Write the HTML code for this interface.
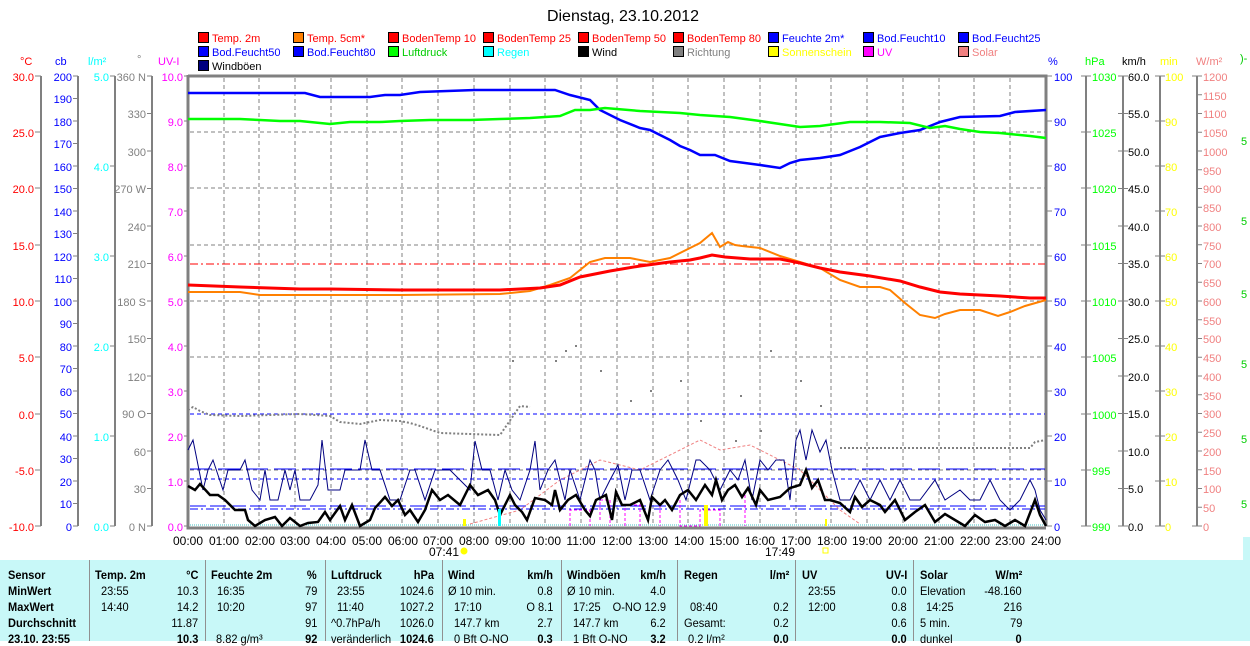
<!DOCTYPE html>
<html><head><meta charset="utf-8"><style>
body{margin:0;width:1250px;height:641px;overflow:hidden;background:#fff;font-family:"Liberation Sans",sans-serif;}
svg{position:absolute;left:0;top:0}
.tb{position:absolute;left:0;top:560px;width:1243px;height:81px;background:#c8f8f8}
.c{position:absolute;font-size:12px;white-space:nowrap;color:#000;transform:scaleX(0.92);transform-origin:left}
.r{transform-origin:right}
.b{font-weight:bold}
</style></head><body>
<svg width="1250" height="641" font-family="Liberation Sans, sans-serif" font-size="11">
<text x="623" y="21" font-size="16" text-anchor="middle">Dienstag, 23.10.2012</text>
<g stroke="#000" stroke-width="1">
<rect x="198.5" y="32.5" width="10" height="10" fill="#f00"/><rect x="293.5" y="32.5" width="10" height="10" fill="#ff8000"/><rect x="388.5" y="32.5" width="10" height="10" fill="#f00"/><rect x="483.5" y="32.5" width="10" height="10" fill="#f00"/><rect x="578.5" y="32.5" width="10" height="10" fill="#f00"/><rect x="673.5" y="32.5" width="10" height="10" fill="#f00"/><rect x="768.5" y="32.5" width="10" height="10" fill="#00f"/><rect x="863.5" y="32.5" width="10" height="10" fill="#00f"/><rect x="958.5" y="32.5" width="10" height="10" fill="#00f"/>
<rect x="198.5" y="46.5" width="10" height="10" fill="#00f"/><rect x="293.5" y="46.5" width="10" height="10" fill="#00f"/><rect x="388.5" y="46.5" width="10" height="10" fill="#0f0"/><rect x="483.5" y="46.5" width="10" height="10" fill="#0ff"/><rect x="578.5" y="46.5" width="10" height="10" fill="#000"/><rect x="673.5" y="46.5" width="10" height="10" fill="#808080"/><rect x="768.5" y="46.5" width="10" height="10" fill="#ff0"/><rect x="863.5" y="46.5" width="10" height="10" fill="#f0f"/><rect x="958.5" y="46.5" width="10" height="10" fill="#f08080"/>
<rect x="198.5" y="60.5" width="10" height="10" fill="#000080"/>
</g>
<g>
<text x="212" y="42" fill="#f00">Temp. 2m</text><text x="307" y="42" fill="#f00">Temp. 5cm*</text><text x="402" y="42" fill="#f00">BodenTemp 10</text><text x="497" y="42" fill="#f00">BodenTemp 25</text><text x="592" y="42" fill="#f00">BodenTemp 50</text><text x="687" y="42" fill="#f00">BodenTemp 80</text><text x="782" y="42" fill="#00f">Feuchte 2m*</text><text x="877" y="42" fill="#00f">Bod.Feucht10</text><text x="972" y="42" fill="#00f">Bod.Feucht25</text>
<text x="212" y="56" fill="#00f">Bod.Feucht50</text><text x="307" y="56" fill="#00f">Bod.Feucht80</text><text x="402" y="56" fill="#0c0">Luftdruck</text><text x="497" y="56" fill="#0ff">Regen</text><text x="592" y="56" fill="#000">Wind</text><text x="687" y="56" fill="#808080">Richtung</text><text x="782" y="56" fill="#ff0">Sonnenschein</text><text x="877" y="56" fill="#f0f">UV</text><text x="972" y="56" fill="#f08080">Solar</text>
<text x="212" y="70" fill="#000">Windböen</text>
</g>
<text x="20" y="65" fill="#f00">°C</text><text x="55" y="65" fill="#00f">cb</text><text x="88" y="65" fill="#0ff">l/m²</text><text x="137" y="63" fill="#808080">°</text><text x="158" y="65" fill="#f0f">UV-I</text>
<text x="1048" y="65" fill="#00f">%</text><text x="1085" y="65" fill="#0f0">hPa</text><text x="1122" y="65" fill="#000">km/h</text><text x="1160" y="65" fill="#ff0">min</text><text x="1196" y="65" fill="#f08080">W/m²</text>
<g stroke="#808080" stroke-width="2">
<line x1="41" y1="76" x2="41" y2="526"/><line x1="78" y1="76" x2="78" y2="526"/><line x1="115" y1="76" x2="115" y2="526"/><line x1="152" y1="76" x2="152" y2="526"/>
<line x1="1086" y1="76" x2="1086" y2="526"/><line x1="1123" y1="76" x2="1123" y2="526"/><line x1="1160" y1="76" x2="1160" y2="526"/><line x1="1197" y1="76" x2="1197" y2="526"/>
</g>
<g fill="#f00" text-anchor="end">
<text x="34" y="81">30.0</text><text x="34" y="137">25.0</text><text x="34" y="193">20.0</text><text x="34" y="250">15.0</text><text x="34" y="306">10.0</text><text x="34" y="362">5.0</text><text x="34" y="419">0.0</text><text x="34" y="475">-5.0</text><text x="34" y="531">-10.0</text></g>
<g stroke="#808080"><path d="M35 76h6M35 132h6M35 188h6M35 245h6M35 301h6M35 357h6M35 414h6M35 470h6M35 526h6"/>
<path d="M73 76h5M73 98.5h5M73 121h5M73 143.5h5M73 166h5M73 188.5h5M73 211h5M73 233.5h5M73 256h5M73 278.5h5M73 301h5M73 323.5h5M73 346h5M73 368.5h5M73 391h5M73 413.5h5M73 436h5M73 458.5h5M73 481h5M73 503.5h5M73 526h5"/>
<path d="M110 76h5M110 166h5M110 256h5M110 346h5M110 436h5M110 526h5"/>
<path d="M147 76h5M147 113.5h5M147 151h5M147 188.5h5M147 226h5M147 263.5h5M147 301h5M147 338.5h5M147 376h5M147 413.5h5M147 451h5M147 488.5h5M147 526h5"/>
<path d="M184 76h4M184 121h4M184 166h4M184 211h4M184 256h4M184 301h4M184 346h4M184 391h4M184 436h4M184 481h4M184 526h4"/>
<path d="M1046 76h6M1046 121h6M1046 166h6M1046 211h6M1046 256h6M1046 301h6M1046 346h6M1046 391h6M1046 436h6M1046 481h6M1046 526h6"/>
<path d="M1081 76h10M1081 132h10M1081 188h10M1081 245h10M1081 301h10M1081 357h10M1081 414h10M1081 470h10M1081 526h10"/>
<path d="M1118 76h10M1118 113.5h10M1118 151h10M1118 188.5h10M1118 226h10M1118 263.5h10M1118 301h10M1118 338.5h10M1118 376h10M1118 413.5h10M1118 451h10M1118 488.5h10M1118 526h10"/>
<path d="M1155 76h10M1155 121h10M1155 166h10M1155 211h10M1155 256h10M1155 301h10M1155 346h10M1155 391h10M1155 436h10M1155 481h10M1155 526h10"/>
<path d="M1192 76h10M1197 94.75h5M1197 113.5h5M1197 132.25h5M1197 151h5M1197 169.75h5M1197 188.5h5M1197 207.25h5M1197 226h5M1197 244.75h5M1197 263.5h5M1197 282.25h5M1197 301h5M1197 319.75h5M1197 338.5h5M1197 357.25h5M1197 376h5M1197 394.75h5M1197 413.5h5M1197 432.25h5M1197 451h5M1197 469.75h5M1197 488.5h5M1197 507.25h5M1192 526h10"/>
</g>
<g fill="#00f" text-anchor="end">
<text x="72" y="81">200</text><text x="72" y="103">190</text><text x="72" y="126">180</text><text x="72" y="148">170</text><text x="72" y="171">160</text><text x="72" y="193">150</text><text x="72" y="216">140</text><text x="72" y="238">130</text><text x="72" y="261">120</text><text x="72" y="283">110</text><text x="72" y="306">100</text><text x="72" y="328">90</text><text x="72" y="351">80</text><text x="72" y="373">70</text><text x="72" y="396">60</text><text x="72" y="418">50</text><text x="72" y="441">40</text><text x="72" y="463">30</text><text x="72" y="486">20</text><text x="72" y="508">10</text><text x="72" y="531">0</text></g>
<g fill="#0ff" text-anchor="end"><text x="109" y="81">5.0</text><text x="109" y="171">4.0</text><text x="109" y="261">3.0</text><text x="109" y="351">2.0</text><text x="109" y="441">1.0</text><text x="109" y="531">0.0</text></g>
<g fill="#808080" text-anchor="end"><text x="146" y="81">360 N</text><text x="146" y="118">330</text><text x="146" y="156">300</text><text x="146" y="193">270 W</text><text x="146" y="231">240</text><text x="146" y="268">210</text><text x="146" y="306">180 S</text><text x="146" y="343">150</text><text x="146" y="381">120</text><text x="146" y="418">90  O</text><text x="146" y="456">60</text><text x="146" y="493">30</text><text x="146" y="531">0   N</text></g>
<g fill="#f0f" text-anchor="end"><text x="183" y="81">10.0</text><text x="183" y="126">9.0</text><text x="183" y="171">8.0</text><text x="183" y="216">7.0</text><text x="183" y="261">6.0</text><text x="183" y="306">5.0</text><text x="183" y="351">4.0</text><text x="183" y="396">3.0</text><text x="183" y="441">2.0</text><text x="183" y="486">1.0</text><text x="183" y="531">0.0</text></g>
<g fill="#00f"><text x="1054" y="81">100</text><text x="1054" y="126">90</text><text x="1054" y="171">80</text><text x="1054" y="216">70</text><text x="1054" y="261">60</text><text x="1054" y="306">50</text><text x="1054" y="351">40</text><text x="1054" y="396">30</text><text x="1054" y="441">20</text><text x="1054" y="486">10</text><text x="1054" y="531">0</text></g>
<g fill="#0f0"><text x="1092" y="81">1030</text><text x="1092" y="137">1025</text><text x="1092" y="193">1020</text><text x="1092" y="250">1015</text><text x="1092" y="306">1010</text><text x="1092" y="362">1005</text><text x="1092" y="419">1000</text><text x="1092" y="475">995</text><text x="1092" y="531">990</text></g>
<g fill="#000"><text x="1128" y="81">60.0</text><text x="1128" y="118">55.0</text><text x="1128" y="156">50.0</text><text x="1128" y="193">45.0</text><text x="1128" y="231">40.0</text><text x="1128" y="268">35.0</text><text x="1128" y="306">30.0</text><text x="1128" y="343">25.0</text><text x="1128" y="381">20.0</text><text x="1128" y="418">15.0</text><text x="1128" y="456">10.0</text><text x="1128" y="493">5.0</text><text x="1128" y="531">0.0</text></g>
<g fill="#ff0"><text x="1165" y="81">100</text><text x="1165" y="126">90</text><text x="1165" y="171">80</text><text x="1165" y="216">70</text><text x="1165" y="261">60</text><text x="1165" y="306">50</text><text x="1165" y="351">40</text><text x="1165" y="396">30</text><text x="1165" y="441">20</text><text x="1165" y="486">10</text><text x="1165" y="531">0</text></g>
<g fill="#f08080"><text x="1203" y="81">1200</text><text x="1203" y="100">1150</text><text x="1203" y="118">1100</text><text x="1203" y="137">1050</text><text x="1203" y="156">1000</text><text x="1203" y="175">950</text><text x="1203" y="193">900</text><text x="1203" y="212">850</text><text x="1203" y="231">800</text><text x="1203" y="250">750</text><text x="1203" y="268">700</text><text x="1203" y="287">650</text><text x="1203" y="306">600</text><text x="1203" y="325">550</text><text x="1203" y="343">500</text><text x="1203" y="362">450</text><text x="1203" y="381">400</text><text x="1203" y="400">350</text><text x="1203" y="418">300</text><text x="1203" y="437">250</text><text x="1203" y="456">200</text><text x="1203" y="475">150</text><text x="1203" y="493">100</text><text x="1203" y="512">50</text><text x="1203" y="531">0</text></g>
<g fill="#0c0"><text x="1240" y="62">)-</text><text x="1241" y="145">5</text><text x="1241" y="225">5</text><text x="1241" y="298">5</text><text x="1241" y="368">5</text><text x="1241" y="443">5</text><text x="1241" y="508">5</text></g>
<g stroke="#808080" stroke-dasharray="4,3" stroke-width="1">
<path d="M224 78V526M259 78V526M295 78V526M331 78V526M367 78V526M402 78V526M438 78V526M474 78V526M510 78V526M545 78V526M581 78V526M617 78V526M653 78V526M688 78V526M724 78V526M760 78V526M796 78V526M831 78V526M867 78V526M903 78V526M939 78V526M974 78V526M1010 78V526"/>
<path d="M190 132H1045M190 188H1045M190 245H1045M190 301H1045M190 357H1045M190 470H1045"/>
</g>
<g fill="none">
<path d="M188 76H1046V526" stroke="#808080" stroke-width="3"/>
<path d="M188 75V528H1046" stroke="#808080" stroke-width="3"/>
<path d="M190 525H1045" stroke="#40c0c0" stroke-dasharray="1,1"/>
<path d="M190 264H1045" stroke="#f00" stroke-dasharray="8,3,2,3"/>
<path d="M190 414H1045" stroke="#00f" stroke-dasharray="4,3"/>
<path d="M190 469H1045" stroke="#00f" stroke-dasharray="22,6"/>
<path d="M190 479H1045" stroke="#00f" stroke-dasharray="4,3"/>
<path d="M190 506H1045" stroke="#00f" stroke-dasharray="16,4"/>
<path d="M190 509H1045" stroke="#00f" stroke-dasharray="8,3,2,3"/>
<path d="M188 410 193 407 200 411 210 415 240 416 300 414 330 416 340 422 360 424 380 420 400 421 410 423 420 426 440 433 470 434 500 435 520 406 530 407" stroke="#808080" stroke-width="2" stroke-dasharray="2,2"/>
<path d="M840 448L1030 448L1035 442L1046 440" stroke="#808080" stroke-width="2" stroke-dasharray="2,2"/>
<g fill="#808080" stroke="none"><rect x="555" y="360" width="2" height="2"/><rect x="565" y="350" width="2" height="2"/><rect x="575" y="345" width="2" height="2"/><rect x="600" y="370" width="2" height="2"/><rect x="630" y="400" width="2" height="2"/><rect x="650" y="390" width="2" height="2"/><rect x="680" y="380" width="2" height="2"/><rect x="700" y="420" width="2" height="2"/><rect x="740" y="395" width="2" height="2"/><rect x="770" y="350" width="2" height="2"/><rect x="800" y="380" width="2" height="2"/><rect x="820" y="405" width="2" height="2"/><rect x="735" y="440" width="2" height="2"/><rect x="760" y="430" width="2" height="2"/><rect x="512" y="360" width="2" height="2"/></g>
<path d="M470 524 520 510 560 480 600 460 640 470 680 450 700 440 720 450 750 445 780 460 800 470 820 490 840 510 860 524" stroke="#f08080" stroke-dasharray="3,2"/>
<path d="M570 526V510H590V526M600 520V500H610V526M625 526V505H640V526M660 505V526M680 500V526H700V510H720V526M745 495V526" stroke="#f0f" stroke-dasharray="3,2"/>
<polyline points="188,93 305,93 320,97 370,97 385,95 400,95 420,92 475,90 555,90 570,95 590,100 600,110 620,120 640,128 650,130 670,140 680,146 690,150 700,155 715,155 730,161 745,163 760,165 780,168 790,163 800,160 820,158 840,155 860,147 880,137 900,133 920,130 930,126 940,122 960,117 1000,116 1015,112 1046,110" stroke="#00f" stroke-width="2.5"/>
<polyline points="188,119 240,119 260,120 280,121 300,121 330,124 350,122 380,122 400,121 430,120 470,120 500,119 530,118 560,116 575,110 590,110 605,108 640,111 680,113 700,115 730,117 760,121 780,124 800,127 820,126 850,122 880,122 910,123 930,128 945,126 960,129 980,132 1000,133 1030,136 1046,138" stroke="#0f0" stroke-width="2.5"/>
<polyline points="188,292 240,292 260,295 300,295 400,295 500,294 530,291 550,285 570,278 590,262 605,258 630,258 650,262 670,258 690,248 700,243 712,233 720,247 728,242 735,245 742,246 760,248 780,256 800,262 820,268 840,280 860,287 880,287 890,290 905,303 920,315 935,318 945,314 960,310 980,310 998,316 1010,312 1025,306 1046,300" stroke="#ff8000" stroke-width="2"/>
<polyline points="188,285 240,287 300,289 330,289 400,290 500,290 540,288 560,285 580,277 610,271 640,266 670,262 690,260 700,258 712,255 725,257 750,259 780,259 800,263 820,268 840,272 870,276 900,281 920,287 940,292 960,294 1000,296 1030,298 1046,298" stroke="#f00" stroke-width="3"/>
<polyline points="188,450 193,440 198,465 203,490 208,470 213,460 218,475 223,490 228,470 240,470 245,460 252,490 260,500 265,470 270,500 278,500 285,470 290,490 295,470 300,500 310,500 318,485 322,440 328,490 340,490 345,470 360,470 365,440 372,470 380,470 390,500 400,500 410,470 415,470 425,500 435,470 450,470 470,490 475,441 482,470 490,470 498,500 505,470 512,490 520,500 530,470 535,441 540,490 548,470 555,460 565,500 570,470 580,500 590,460 595,470 600,500 610,480 618,465 625,500 632,470 640,470 650,500 660,470 668,460 678,480 686,500 696,460 700,460 710,470 720,490 730,470 738,480 745,460 752,500 760,460 768,470 776,460 784,460 790,500 796,440 800,430 806,460 812,430 820,452 826,440 832,470 840,500 850,500 860,480 870,500 880,480 890,500 900,480 910,500 920,500 935,480 945,500 960,490 970,500 980,500 990,480 1000,500 1010,510 1020,500 1030,480 1035,490 1040,510 1046,520" stroke="#000080" stroke-width="1"/>
<polyline points="188,486 195,490 200,484 210,495 218,495 225,500 235,510 245,510 248,520 255,526 265,520 275,517 282,526 290,518 300,526 308,523 318,522 325,512 330,520 340,506 345,520 352,505 360,526 370,520 375,508 385,497 392,506 398,500 405,515 410,510 418,522 425,510 432,490 440,500 448,495 460,505 470,485 478,495 488,490 495,500 500,515 510,495 515,505 522,512 527,520 535,498 545,500 552,505 555,490 560,510 568,500 576,495 585,510 590,516 596,500 606,495 612,520 616,492 622,505 630,505 640,500 648,520 652,497 660,505 665,500 672,510 680,495 688,490 696,500 705,485 712,495 716,480 722,500 728,490 735,485 742,497 748,488 756,505 760,490 768,500 780,497 790,488 800,485 806,470 812,488 818,480 825,500 830,500 840,503 850,512 855,497 862,507 870,500 880,505 885,512 895,500 905,520 915,512 925,505 935,522 945,514 955,520 965,526 975,515 985,522 995,520 1005,526 1015,520 1025,526 1035,500 1040,515 1046,526" stroke="#000" stroke-width="2.5"/>
</g>
<rect x="463" y="519" width="3" height="7" fill="#ff0"/><rect x="498" y="509" width="3" height="17" fill="#0ff"/><rect x="704" y="505" width="4" height="21" fill="#ff0"/><rect x="825" y="519" width="2" height="7" fill="#ff0"/>
<g fill="#000" text-anchor="middle" font-size="12">
<text x="188" y="545">00:00</text><text x="224" y="545">01:00</text><text x="260" y="545">02:00</text><text x="295" y="545">03:00</text><text x="331" y="545">04:00</text><text x="367" y="545">05:00</text><text x="403" y="545">06:00</text><text x="438" y="545">07:00</text><text x="474" y="545">08:00</text><text x="510" y="545">09:00</text><text x="546" y="545">10:00</text><text x="581" y="545">11:00</text><text x="617" y="545">12:00</text><text x="653" y="545">13:00</text><text x="689" y="545">14:00</text><text x="724" y="545">15:00</text><text x="760" y="545">16:00</text><text x="796" y="545">17:00</text><text x="832" y="545">18:00</text><text x="867" y="545">19:00</text><text x="903" y="545">20:00</text><text x="939" y="545">21:00</text><text x="975" y="545">22:00</text><text x="1010" y="545">23:00</text><text x="1046" y="545">24:00</text>
<text x="444" y="556">07:41</text><text x="780" y="556">17:49</text></g>
<circle cx="464" cy="551" r="3.5" fill="#ff0"/><rect x="823" y="548" width="5" height="5" fill="none" stroke="#ff0"/>
<rect x="1243" y="537" width="7" height="104" fill="#c8f8f8"/>
</svg>
<div class="tb">
<svg width="1243" height="81" style="position:absolute;left:0;top:0"><g stroke="#909090" stroke-width="1"><path d="M89.5 0V81M205.5 0V81M325.5 0V81M442.5 0V81M561.5 0V81M677.5 0V81M795.5 0V81M913.5 0V81"/></g></svg>
</div>
<div style="position:absolute;left:0;top:560px;width:1243px;height:81px;font-size:12px">
<div class="c b" style="left:8px;top:8px">Sensor</div><div class="c b" style="left:8px;top:24px">MinWert</div><div class="c b" style="left:8px;top:40px">MaxWert</div><div class="c b" style="left:8px;top:56px">Durchschnitt</div><div class="c b" style="left:8px;top:72px">23.10. 23:55</div>
<div class="c b" style="left:95px;top:8px">Temp. 2m</div><div class="c b r" style="right:1045px;top:8px">°C</div>
<div class="c" style="left:101px;top:24px">23:55</div><div class="c r" style="right:1045px;top:24px">10.3</div>
<div class="c" style="left:101px;top:40px">14:40</div><div class="c r" style="right:1045px;top:40px">14.2</div>
<div class="c r" style="right:1045px;top:56px">11.87</div><div class="c b r" style="right:1045px;top:72px">10.3</div>
<div class="c b" style="left:211px;top:8px">Feuchte 2m</div><div class="c b r" style="right:926px;top:8px">%</div>
<div class="c" style="left:217px;top:24px">16:35</div><div class="c r" style="right:926px;top:24px">79</div>
<div class="c" style="left:217px;top:40px">10:20</div><div class="c r" style="right:926px;top:40px">97</div>
<div class="c r" style="right:926px;top:56px">91</div><div class="c" style="left:216px;top:72px">8.82 g/m³</div><div class="c b r" style="right:926px;top:72px">92</div>
<div class="c b" style="left:331px;top:8px">Luftdruck</div><div class="c b r" style="right:809px;top:8px">hPa</div>
<div class="c" style="left:337px;top:24px">23:55</div><div class="c r" style="right:809px;top:24px">1024.6</div>
<div class="c" style="left:337px;top:40px">11:40</div><div class="c r" style="right:809px;top:40px">1027.2</div>
<div class="c" style="left:331px;top:56px">^0.7hPa/h</div><div class="c r" style="right:809px;top:56px">1026.0</div>
<div class="c" style="left:331px;top:72px">veränderlich</div><div class="c b r" style="right:809px;top:72px">1024.6</div>
<div class="c b" style="left:448px;top:8px">Wind</div><div class="c b r" style="right:690px;top:8px">km/h</div>
<div class="c" style="left:448px;top:24px">Ø 10 min.</div><div class="c r" style="right:690px;top:24px">0.8</div>
<div class="c" style="left:454px;top:40px">17:10</div><div class="c r" style="right:690px;top:40px">O 8.1</div>
<div class="c" style="left:454px;top:56px">147.7 km</div><div class="c r" style="right:690px;top:56px">2.7</div>
<div class="c" style="left:454px;top:72px">0 Bft O-NO</div><div class="c b r" style="right:690px;top:72px">0.3</div>
<div class="c b" style="left:567px;top:8px">Windböen</div><div class="c b r" style="right:577px;top:8px">km/h</div>
<div class="c" style="left:567px;top:24px">Ø 10 min.</div><div class="c r" style="right:577px;top:24px">4.0</div>
<div class="c" style="left:573px;top:40px">17:25</div><div class="c r" style="right:577px;top:40px">O-NO 12.9</div>
<div class="c" style="left:573px;top:56px">147.7 km</div><div class="c r" style="right:577px;top:56px">6.2</div>
<div class="c" style="left:573px;top:72px">1 Bft O-NO</div><div class="c b r" style="right:577px;top:72px">3.2</div>
<div class="c b" style="left:684px;top:8px">Regen</div><div class="c b r" style="right:454px;top:8px">l/m²</div>
<div class="c" style="left:690px;top:40px">08:40</div><div class="c r" style="right:454px;top:40px">0.2</div>
<div class="c" style="left:684px;top:56px">Gesamt:</div><div class="c r" style="right:454px;top:56px">0.2</div>
<div class="c" style="left:688px;top:72px">0.2 l/m²</div><div class="c b r" style="right:454px;top:72px">0.0</div>
<div class="c b" style="left:802px;top:8px">UV</div><div class="c b r" style="right:336px;top:8px">UV-I</div>
<div class="c" style="left:808px;top:24px">23:55</div><div class="c r" style="right:336px;top:24px">0.0</div>
<div class="c" style="left:808px;top:40px">12:00</div><div class="c r" style="right:336px;top:40px">0.8</div>
<div class="c r" style="right:336px;top:56px">0.6</div><div class="c b r" style="right:336px;top:72px">0.0</div>
<div class="c b" style="left:920px;top:8px">Solar</div><div class="c b r" style="right:221px;top:8px">W/m²</div>
<div class="c" style="left:920px;top:24px">Elevation</div><div class="c r" style="right:221px;top:24px">-48.160</div>
<div class="c" style="left:926px;top:40px">14:25</div><div class="c r" style="right:221px;top:40px">216</div>
<div class="c" style="left:920px;top:56px">5 min.</div><div class="c r" style="right:221px;top:56px">79</div>
<div class="c" style="left:920px;top:72px">dunkel</div><div class="c b r" style="right:221px;top:72px">0</div>
</div>
</body></html>
